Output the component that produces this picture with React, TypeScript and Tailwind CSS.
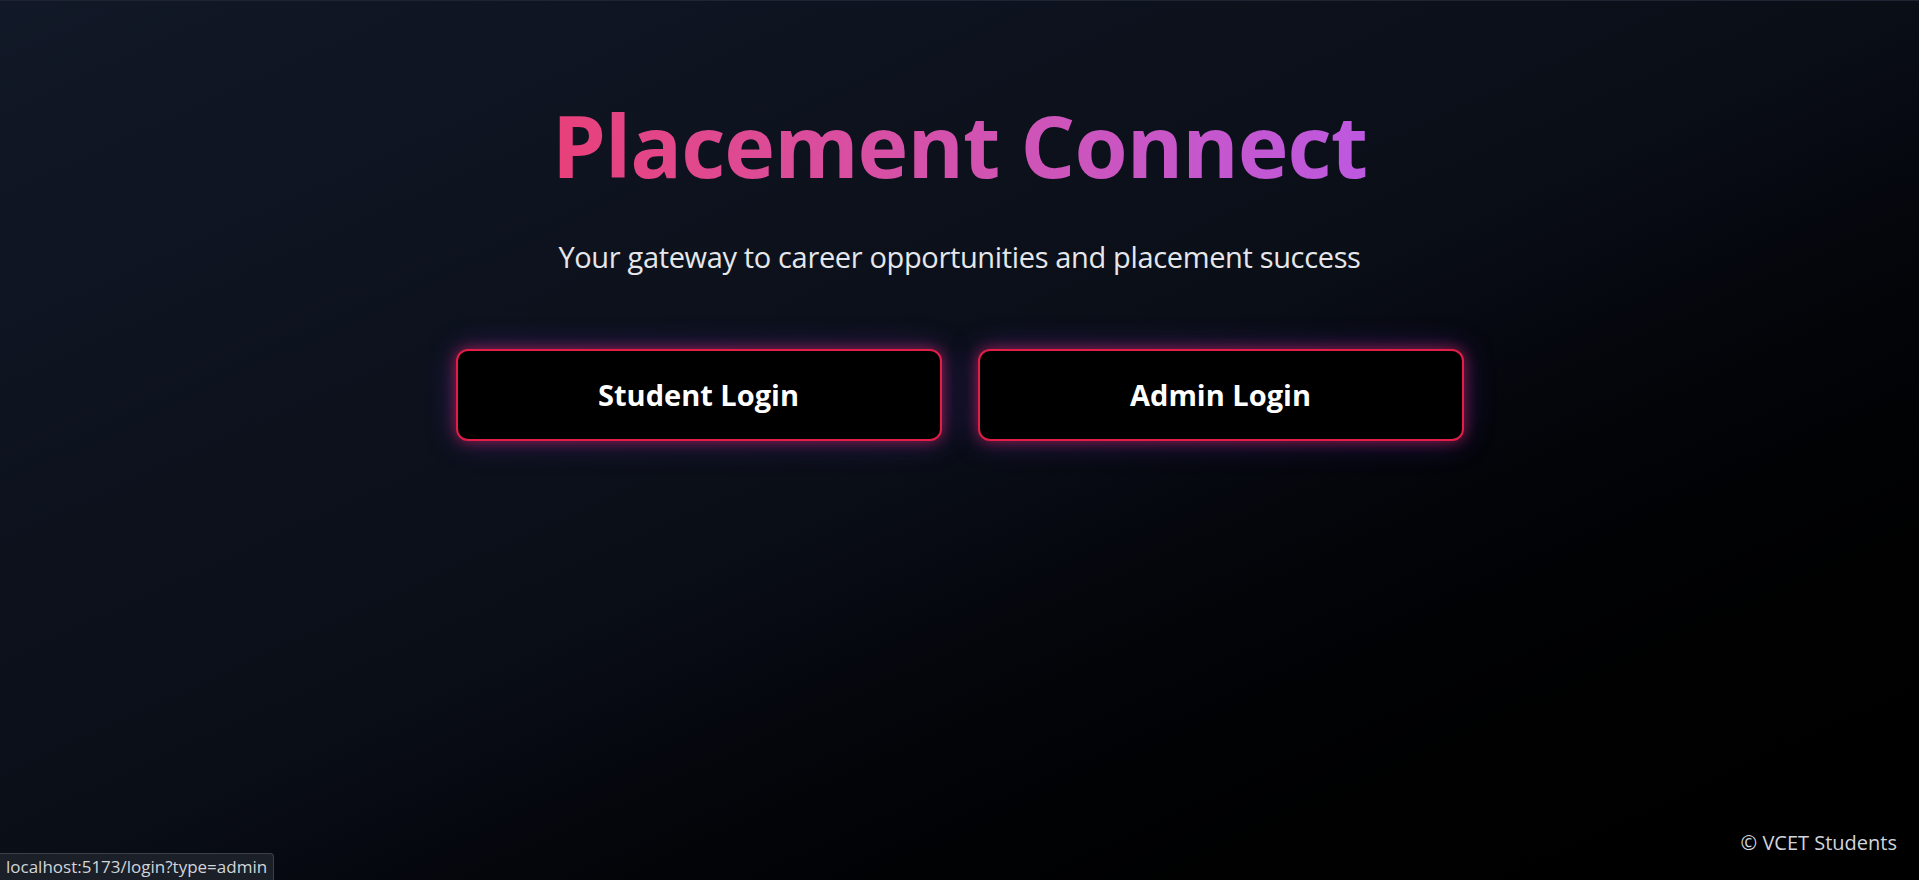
const App = () => {
    return (
        <div className="relative h-screen w-full overflow-hidden bg-gradient-to-br from-[#111827] via-[#0a0e17] to-black font-['Open_Sans','Noto_Sans',sans-serif] text-white">
            <div className="h-px w-full bg-[#1f2433]" />

            <main className="flex flex-col items-center pt-[94px]">
                <h1 className="bg-gradient-to-r from-[#e8407a] to-[#bd58e0] bg-clip-text pb-2 text-[86px] leading-[100px] font-bold tracking-[-1px] text-transparent">
                    Placement Connect
                </h1>
                <p className="mt-[36px] text-[29px] leading-[36px] text-gray-200 tracking-[-0.35px]">
                    Your gateway to career opportunities and placement success
                </p>

                {/* Login buttons */}
                <div className="mt-[74px] flex gap-[36px]">
                    <button className="flex h-[92px] w-[486px] items-center justify-center rounded-xl border-2 border-[#e11d48] bg-black text-[29px] font-bold shadow-[0_0_14px_rgba(225,29,72,0.6),0_0_30px_rgba(124,58,237,0.35)]">
                        Student Login
                    </button>
                    <button className="flex h-[92px] w-[486px] items-center justify-center rounded-xl border-2 border-[#e11d48] bg-black text-[29px] font-bold shadow-[0_0_14px_rgba(225,29,72,0.6),0_0_30px_rgba(124,58,237,0.35)]">
                        Admin Login
                    </button>
                </div>
            </main>

            <footer className="absolute bottom-[22px] right-[22px] text-[20px] text-gray-300">
                © VCET Students
            </footer>

            {/* browser status bubble */}
            <div className="absolute bottom-0 left-0 rounded-tr border-t border-r border-[#3a3f4a] bg-[#1b1f27] px-[6px] text-[17px] leading-[26px] text-gray-300">
                localhost:5173/login?type=admin
            </div>
        </div>
    );
};

export default App;
